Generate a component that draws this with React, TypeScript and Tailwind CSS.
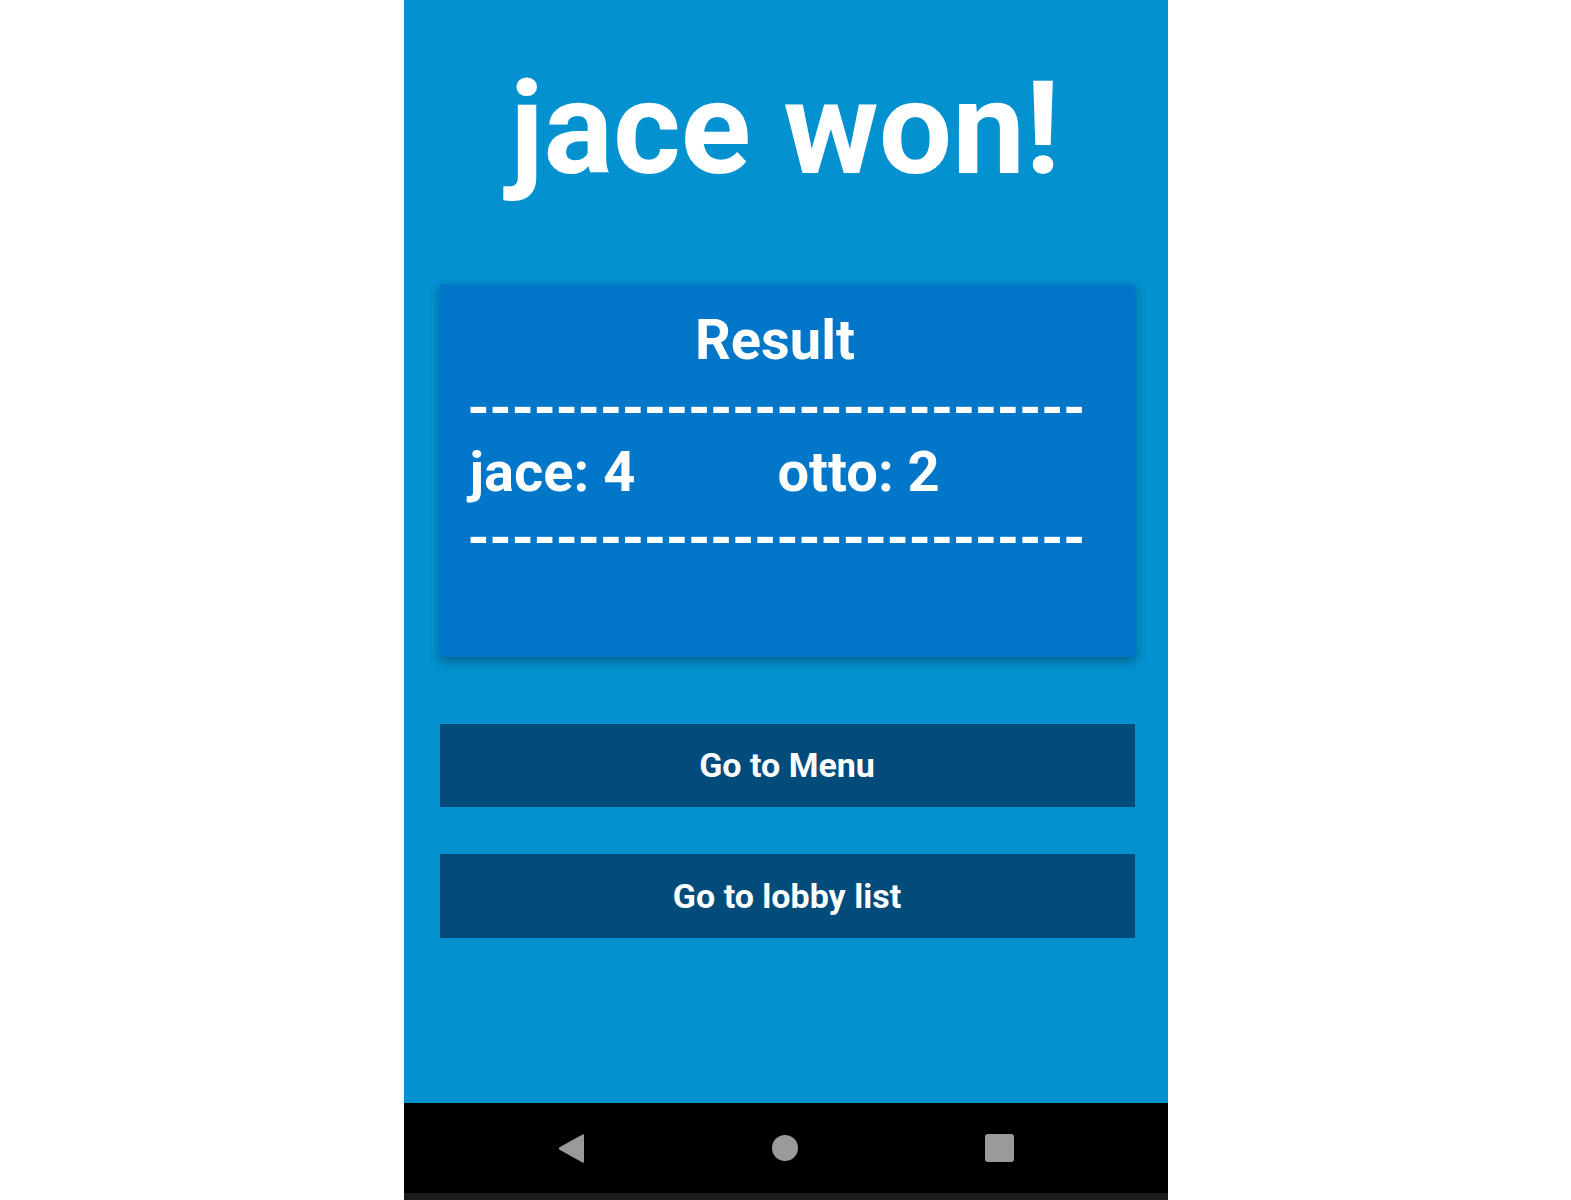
import React from "react";

const DASHES = "----------------------------";

function NavBar() {
  return (
    <div className="h-[90px] bg-black flex items-center justify-center gap-[187px]">
      <svg width="28" height="31" viewBox="0 0 28 31">
        <path
          d="M25.5 1.5 L2.5 14.2 Q1 15.5 2.5 16.8 L25.5 29.5 Q27 30.3 27 28.5 L27 2.5 Q27 0.7 25.5 1.5 Z"
          fill="#9a9a9a"
        />
      </svg>
      <div className="w-[26px] h-[26px] rounded-full bg-[#9a9a9a]" />
      <div className="w-[29px] h-[28px] rounded-[3px] bg-[#9a9a9a]" />
    </div>
  );
}

function ResultCard() {
  return (
    <div className="h-[373px] bg-[#0277c9] shadow-[0_4px_10px_rgba(0,0,0,0.35)] px-[30px] pt-[28px] flex flex-col">
      <h2 className="text-[56px] leading-[56px] font-bold text-white text-center pr-[24px]">
        Result
      </h2>
      <div className="mt-[12px] -ml-[2px] text-[56px] leading-[56px] font-bold text-white whitespace-nowrap">
        {DASHES}
      </div>
      <div className="mt-[8px] flex text-[56px] leading-[56px] font-bold text-white">
        <span className="w-[308px]">jace: 4</span>
        <span>otto: 2</span>
      </div>
      <div className="mt-[10px] -ml-[2px] text-[56px] leading-[56px] font-bold text-white whitespace-nowrap">
        {DASHES}
      </div>
    </div>
  );
}

export default function App() {
  return (
    <div className="min-h-[1200px] bg-white" style={{ fontFamily: "Roboto, 'Noto Sans', sans-serif" }}>
      <div className="w-[764px] h-[1200px] mx-auto flex flex-col bg-[#0391cf]">
        <div className="flex-1 flex flex-col pl-[36px] pr-[33px]">
          <h1 className="mt-[63px] text-[130px] leading-[131px] font-bold text-white text-center pr-[4px]">
            jace won!
          </h1>
          <div className="mt-[90px]">
            <ResultCard />
          </div>
          <button className="mt-[67px] h-[83px] bg-[#024c7c] text-white font-bold text-[34px]">
            Go to Menu
          </button>
          <button className="mt-[47px] h-[84px] bg-[#024c7c] text-white font-bold text-[34px]">
            Go to lobby list
          </button>
        </div>
        <NavBar />
        <div className="h-[7px] bg-[#1b1b1b]" />
      </div>
    </div>
  );
}
